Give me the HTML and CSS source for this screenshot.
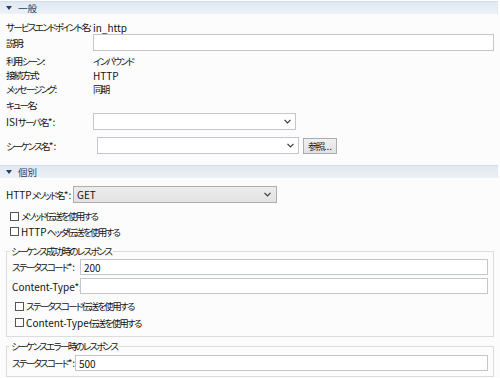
FILE: index.html
```html
<!DOCTYPE html>
<html>
<head>
  <title>サービスエンドポイント設定</title>
  <meta charset="UTF-8">
  <link rel="stylesheet" href="styles.css">
</head>
<body>
  <!-- 一般 -->
  <div class="section-head"><span class="twisty"></span><span class="ja">一般</span></div>
  <div class="section-body general">
    <div class="row"><span class="label"><span class="ja">サービスエンドポイント名</span>:</span><span>in_http</span></div>
    <div class="row row-field mt-1"><span class="label"><span class="ja">説明</span>:</span><input class="text-input" type="text"></div>
    <div class="row mt-3"><span class="label"><span class="ja">利用シーン</span>:</span><span class="ja">インバウンド</span></div>
    <div class="row mt-1"><span class="label"><span class="ja">接続方式</span>:</span><span>HTTP</span></div>
    <div class="row mt-1"><span class="label"><span class="ja">メッセージング</span>:</span><span class="ja">同期</span></div>
    <div class="row mt-3"><span class="label"><span class="ja">キュー名</span>:</span><span></span></div>
    <div class="row row-field mt-2">
      <span class="label">ISI<span class="ja">サーバ名</span>*:</span>
      <div class="combo combo-server">
        <span></span>
        <svg class="chevron" width="7" height="5" viewBox="0 0 7 5"><polyline points="0.5,0.8 3.5,3.8 6.5,0.8" fill="none" stroke="#3a3a3a" stroke-width="1.2"/></svg>
      </div>
    </div>
    <div class="row row-field row-sequence mt-7">
      <span class="label"><span class="ja">シーケンス名</span>*:</span>
      <div class="field-group">
        <div class="combo combo-sequence">
          <span></span>
          <svg class="chevron" width="7" height="5" viewBox="0 0 7 5"><polyline points="0.5,0.8 3.5,3.8 6.5,0.8" fill="none" stroke="#3a3a3a" stroke-width="1.2"/></svg>
        </div>
        <button class="btn-browse"><span class="ja">参照</span>...</button>
      </div>
    </div>
  </div>

  <!-- 個別 -->
  <div class="section-head"><span class="twisty"></span><span class="ja">個別</span></div>
  <div class="section-body individual">
    <div class="row row-field row-method mt-8">
      <span class="label">HTTP<span class="ja">メソッド名</span>*:</span>
      <div class="combo combo-method">
        <span>GET</span>
        <svg class="chevron" width="7" height="5" viewBox="0 0 7 5"><polyline points="0.5,0.8 3.5,3.8 6.5,0.8" fill="none" stroke="#3a3a3a" stroke-width="1.2"/></svg>
      </div>
    </div>
    <div class="check-row mt-7"><span class="box"></span><span class="ja">メソッド伝送を使用する</span></div>
    <div class="check-row mt-2"><span class="box"></span><span>HTTP<span class="ja">ヘッダ伝送を使用する</span></span></div>

    <fieldset class="group group-success">
      <legend class="ja">シーケンス成功時のレスポンス</legend>
      <div class="row row-field"><span class="label"><span class="ja">ステータスコード</span>*:</span><input class="text-input" type="text" value="200"></div>
      <div class="row row-field mt-3"><span class="label">Content-Type*:</span><input class="text-input" type="text"></div>
      <div class="check-row mt-6"><span class="box"></span><span class="ja">ステータスコード伝送を使用する</span></div>
      <div class="check-row mt-3"><span class="box"></span><span>Content-Type<span class="ja">伝送を使用する</span></span></div>
    </fieldset>

    <fieldset class="group group-error">
      <legend class="ja">シーケンスエラー時のレスポンス</legend>
      <div class="row row-field"><span class="label"><span class="ja">ステータスコード</span>*:</span><input class="text-input" type="text" value="500"></div>
    </fieldset>
  </div>
</body>
</html>
```

FILE: styles.css
```css
body {
  margin: 0;
  font-family: "Noto Sans CJK JP", sans-serif;
  font-size: 10px;
  font-feature-settings: "palt";
  color: #141414;
  background: #fcfcfc;
  overflow: hidden;
}

/* 日本語部分は詰めて表示 */
.ja {
  font-size: 9.5px;
  letter-spacing: -1.7px;
  font-feature-settings: "palt";
}

/* セクション見出し */
.section-head {
  display: flex;
  align-items: center;
  gap: 6px;
  height: 13px;
  box-sizing: border-box;
  margin: 1px 2px 0 0;
  padding-left: 6px;
  border-top: 1px solid #d3deea;
  border-right: 1px solid #e3eaf2;
  background: linear-gradient(#e0e8f1, #edf2f7);
  color: #25406a;
  line-height: 12px;
}

.section-head .ja {
  letter-spacing: 0;
}

.twisty {
  width: 0;
  height: 0;
  border-left: 3px solid transparent;
  border-right: 3px solid transparent;
  border-top: 4px solid #25406a;
}

.section-body.general {
  padding-bottom: 10px;
  padding-top: 6px;
}

/* 行 */
.row {
  display: grid;
  align-items: center;
  height: 13px;
  line-height: 13px;
  padding: 0 6px;
  white-space: nowrap;
}

.general .row {
  grid-template-columns: 87px 1fr;
}

.general .row-sequence {
  grid-template-columns: 91px 1fr;
}

.row-field {
  height: 17px;
}

.mt-1 { margin-top: 1px; }
.mt-2 { margin-top: 2px; }
.mt-3 { margin-top: 3px; }
.mt-4 { margin-top: 4px; }
.mt-6 { margin-top: 6px; }
.mt-7 { margin-top: 7px; }
.mt-8 { margin-top: 8px; }

.text-input {
  width: 100%;
  height: 17px;
  box-sizing: border-box;
  margin: 0;
  padding: 0 3px;
  border: 1px solid #c3c6cc;
  background: #fff;
  font: inherit;
  color: #141414;
  outline: none;
}

/* コンボボックス */
.combo {
  display: flex;
  align-items: center;
  justify-content: space-between;
  height: 17px;
  box-sizing: border-box;
  padding: 0 4px 0 3px;
  border: 1px solid #c3c6cc;
  background: #fff;
}

.combo-server {
  width: 203px;
}

.combo-sequence {
  width: 202px;
}

.combo-method {
  width: 204px;
  padding-right: 5px;
  border-color: #adadad;
  background: linear-gradient(#ececec, #e2e2e2);
}

.field-group {
  display: flex;
  align-items: center;
  gap: 4px;
}

.btn-browse {
  height: 16px;
  width: 34px;
  box-sizing: border-box;
  margin: 0;
  padding: 0;
  border: 1px solid #adadad;
  background: linear-gradient(#f0f0f0, #e2e2e2);
  font: inherit;
  line-height: 14px;
  color: #141414;
}

/* 個別 */
.individual .row-method {
  grid-template-columns: 67px 1fr;
}

.check-row {
  display: flex;
  align-items: center;
  gap: 2px;
  height: 13px;
  line-height: 13px;
  padding-left: 10px;
  white-space: nowrap;
}

.box {
  width: 9px;
  height: 9px;
  box-sizing: border-box;
  border: 1px solid #555;
  background: #fff;
}

/* グループ */
.group {
  min-width: 0;
  margin: 7px 6px 0 6px;
  padding: 1px 5px 7px 5px;
  border: 1px solid #dcdcdc;
}

.group legend {
  margin-left: -3px;
  padding: 0 2px;
  line-height: 13px;
}

.group .row {
  padding: 0;
  grid-template-columns: 68px 1fr;
}

.group .row-field,
.group .text-input {
  height: 16px;
}

.group .check-row {
  padding-left: 3px;
}

.group-error {
  margin-top: 3px;
  padding-top: 2px;
  padding-bottom: 5px;
}

.group-error .row {
  grid-template-columns: 63px 1fr;
}
```
